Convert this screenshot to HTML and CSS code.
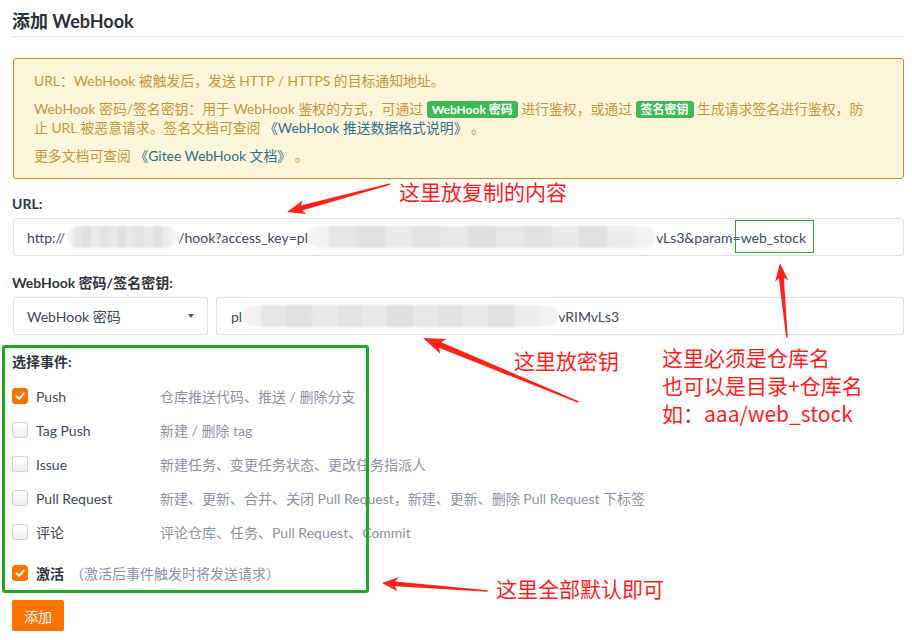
FILE: index.html
```html
<!DOCTYPE html>
<html lang="zh-CN">
<head>
<meta charset="utf-8">
<title>添加 WebHook</title>
<link rel="stylesheet" href="styles.css">
</head>
<body>
<div class="page">
  <h1 class="title">添加 WebHook</h1>
  <div class="notice">
    <p>URL：WebHook 被触发后，发送 HTTP / HTTPS 的目标通知地址。</p>
    <p>WebHook 密码/签名密钥：用于 WebHook 鉴权的方式，可通过 <span class="badge">WebHook 密码</span> 进行鉴权，或通过 <span class="badge">签名密钥</span> 生成请求签名进行鉴权，防<br>止 URL 被恶意请求。签名文档可查阅 <a class="link">《WebHook 推送数据格式说明》</a> 。</p>
    <p>更多文档可查阅 <a class="link">《Gitee WebHook 文档》</a> 。</p>
  </div>
  <div class="field field-url">
    <div class="label">URL:</div>
    <div class="input">http://<span class="blur b1"></span>/hook?access_key=pl<span class="blur b2"></span>vLs3&amp;param=<span class="mark">web_stock</span></div>
  </div>
  <div class="field field-secret">
    <div class="label">WebHook 密码/签名密钥:</div>
    <div class="row">
      <div class="select">WebHook 密码<span class="caret"></span></div>
      <div class="input grow">pl<span class="blur b3"></span>vRIMvLs3</div>
    </div>
  </div>
  <div class="events">
    <div class="label">选择事件:</div>
    <div class="event"><span class="cb on"><svg viewBox="0 0 16 16"><path d="M4 8.4 7 11.2 12.2 5.3"/></svg></span><span class="name">Push</span><span class="desc">仓库推送代码、推送 / 删除分支</span></div>
    <div class="event"><span class="cb"></span><span class="name">Tag Push</span><span class="desc">新建 / 删除 tag</span></div>
    <div class="event"><span class="cb"></span><span class="name">Issue</span><span class="desc">新建任务、变更任务状态、更改任务指派人</span></div>
    <div class="event"><span class="cb"></span><span class="name">Pull Request</span><span class="desc">新建、更新、合并、关闭 Pull Request，新建、更新、删除 Pull Request 下标签</span></div>
    <div class="event"><span class="cb"></span><span class="name">评论</span><span class="desc">评论仓库、任务、Pull Request、Commit</span></div>
    <div class="event event-active"><span class="cb on"><svg viewBox="0 0 16 16"><path d="M4 8.4 7 11.2 12.2 5.3"/></svg></span><span class="name strong">激活</span><span class="hint">（激活后事件触发时将发送请求）</span></div>
  </div>
  <button class="btn">添加</button>
</div>

<div class="green-box"></div>
<svg class="arrows" width="912" height="640" viewBox="0 0 912 640">
  <g fill="#ff2218">
    <polygon transform="translate(287 212) rotate(164.8)" points="0,0 -18,-7 -15,-2.6 -107,-0.8 -107,0.8 -15,2.6 -18,7"/>
    <polygon transform="translate(423 338) rotate(-157.6)" points="0,0 -22,-8 -18.5,-3 -168,-0.8 -168,0.8 -18.5,3 -22,8"/>
    <polygon transform="translate(780 263) rotate(-95.3)" points="0,0 -18,-6.5 -15,-2.5 -75,-0.8 -75,0.8 -15,2.5 -18,6.5"/>
    <polygon transform="translate(382 583) rotate(-175.7)" points="0,0 -16,-7 -13,-2.4 -106,-0.8 -106,0.8 -13,2.4 -16,7"/>
  </g>
</svg>
<div class="note n1">这里放复制的内容</div>
<div class="note n2">这里放密钥</div>
<div class="note n3">这里必须是仓库名<br>也可以是目录+仓库名<br>如：aaa/web_stock</div>
<div class="note n4">这里全部默认即可</div>
</body>
</html>
```

FILE: styles.css
```css
* { box-sizing: border-box; }
html, body { margin: 0; background: #fff; }
body {
  position: relative;
  width: 912px;
  height: 640px;
  overflow: hidden;
  font-family: Lato, "Noto Sans CJK SC", sans-serif;
  font-size: 14px;
  color: #40485b;
}
.page { padding: 9px 8px 0 12px; }

.title {
  margin: 0;
  font-size: 18px;
  line-height: 24px;
  font-weight: 700;
  color: #2c2f36;
  padding-bottom: 3px;
  border-bottom: 1px solid #e3e3e3;
}

.notice {
  margin: 21px 0 0 1px;
  background: #fdf6da;
  border: 1px solid #c8911d;
  border-radius: 3px;
  padding: 13px 20px;
  color: #c3953a;
  font-size: 13.85px;
  line-height: 18px;
}
.notice p { margin: 0 0 10px; white-space: nowrap; }
.notice p:last-child { margin-bottom: 0; }
.badge {
  background: #40b85a;
  color: #fff;
  font-weight: 700;
  font-size: 12px;
  padding: 1px 5px;
  border-radius: 3px;
}
.link { color: #2e6f8e; }

.label {
  font-weight: 700;
  line-height: 20px;
  color: #2f3440;
}
.field .label { margin-bottom: 4px; }
.field-url { margin-top: 15px; }
.field-secret { margin-top: 17px; }

.input {
  display: flex;
  align-items: center;
  height: 38px;
  margin-left: 1px;
  padding: 0 13px;
  border: 1px solid #dfe1e6;
  border-radius: 3px;
  white-space: nowrap;
  color: #40485b;
}
.row { display: flex; gap: 8px; margin-left: 1px; }
.row .input { margin-left: 0; padding-left: 14px; }
.grow { flex: 1; }
.select {
  width: 195px;
  height: 38px;
  display: flex;
  align-items: center;
  justify-content: space-between;
  padding: 0 13px;
  border: 1px solid #dfe1e6;
  border-radius: 3px;
  color: #40485b;
}
.caret {
  width: 0;
  height: 0;
  border-left: 3.5px solid transparent;
  border-right: 3.5px solid transparent;
  border-top: 4px solid #555;
}

.blur {
  display: inline-block;
  height: 22px;
  border-radius: 11px;
  filter: blur(1.2px);
  background: linear-gradient(90deg,
    #f2f2f1 0 6%, #e6e6e6 6% 14%, #e0e0e0 14% 22%, #ebebe9 22% 30%,
    #e2e3e4 30% 38%, #e9e9e9 38% 46%, #dedfe0 46% 54%, #e8e8e6 54% 62%,
    #e1e2e4 62% 70%, #eaeaea 70% 78%, #e0e0e0 78% 86%, #ececec 86% 94%, #f2f2f2 94% 100%);
}
.b1 { width: 110px; margin: 0 1px 0 2px; }
.b2 { width: 348px; }
.b3 { width: 316px; }

.mark { position: relative; }
.mark::after {
  content: "";
  position: absolute;
  left: -6px;
  right: -8px;
  top: -9px;
  bottom: -7px;
  border: 1.5px solid #27a827;
}

.events { margin-top: 17px; }
.events > .label { margin-bottom: 7px; }
.event {
  display: flex;
  align-items: center;
  height: 34px;
}
.cb {
  width: 16px;
  height: 16px;
  margin-right: 8px;
  border: 1px solid #cfd2d9;
  border-radius: 3px;
  background: linear-gradient(#ffffff, #eceef2);
  flex: none;
}
.cb.on { background: #fe7300; border-color: #fe7300; }
.cb svg { display: block; width: 14px; height: 14px; }
.cb path { fill: none; stroke: #fff; stroke-width: 2.3; stroke-linecap: round; stroke-linejoin: round; }
.name { width: 124px; color: #40485b; }
.name.strong { width: auto; font-weight: 700; color: #2f3440; margin-right: 6px; }
.desc, .hint { color: #8c92a4; }
.event-active { margin-top: 7px; }

.btn {
  display: block;
  margin-top: 10px;
  width: 52px;
  height: 31px;
  border: none;
  border-radius: 2px;
  background: #fe7300;
  color: #fff;
  font-family: inherit;
  font-size: 14px;
  padding: 0;
}

.green-box {
  position: absolute;
  left: 2px;
  top: 345px;
  width: 367px;
  height: 248px;
  border: 3px solid #1fa81f;
  border-radius: 3px;
}
.arrows { position: absolute; left: 0; top: 0; }
.note {
  position: absolute;
  font-family: "Noto Sans CJK SC", sans-serif;
  font-size: 21px;
  line-height: 28px;
  color: #ff1d1d;
  white-space: nowrap;
}
.n1 { left: 399px; top: 177px; }
.n2 { left: 514px; top: 346px; }
.n3 { left: 662px; top: 343px; }
.n4 { left: 496px; top: 574px; }
```
